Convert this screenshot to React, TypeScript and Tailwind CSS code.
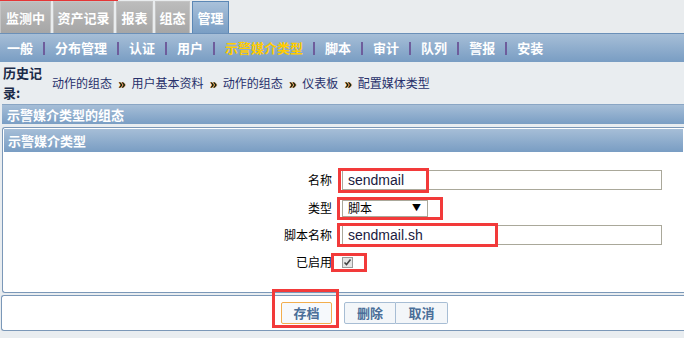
import React from "react";

const cjk = "font-['Noto_Sans_CJK_SC','Noto_Sans',sans-serif]";

function Tab({ label, w, active }: { label: string; w: string; active?: boolean }) {
  return (
    <div
      className={`${w} h-[32px] flex items-center justify-center text-[13px] font-bold text-white ${
        active
          ? "bg-gradient-to-b from-[#a9c1da] to-[#7a9ec4] border border-b-0 border-[#5b87b5]"
          : "bg-gradient-to-b from-[#bcbcbc] to-[#a6a6a6] border border-b-0 border-[#c4c4c4]"
      }`}
    >
      {label}
    </div>
  );
}

function Sep() {
  return <span className="mx-[10px] w-[2px] h-[13px] bg-[#6e5d9c]" />;
}

function Crumb() {
  return (
    <span className="mx-[6px] text-[14px] font-bold text-black [text-shadow:1px_0_#f0a020] leading-none">»</span>
  );
}

export default function App() {
  const navItems = ["一般", "分布管理", "认证", "用户", "示警媒介类型", "脚本", "审计", "队列", "警报", "安装"];
  return (
    <div className={`relative w-[684px] h-[338px] overflow-hidden bg-[#e9edf0] ${cjk}`}>
      {/* Top tabs */}
      <div className="relative h-[33px] flex items-end gap-[2px] bg-[#e9ecee]">
        <div className="absolute top-0 left-0 w-[118px] h-[1px] bg-[#e53535]" />
        <Tab label="监测中" w="w-[51px]" />
        <Tab label="资产记录" w="w-[61px]" />
        <Tab label="报表" w="w-[37px]" />
        <Tab label="组态" w="w-[35px]" />
        <Tab label="管理" w="w-[37px]" active />
      </div>
      {/* Sub nav */}
      <div className="h-[29px] border-t border-[#6b90b8] bg-gradient-to-b from-[#a6bed7] to-[#799dc3] flex items-center pl-[7px] text-[13px] font-bold text-white">
        {navItems.map((n, i) => (
          <React.Fragment key={n}>
            {i > 0 && <Sep />}
            <span className={n === "示警媒介类型" ? "text-[#ffcc00]" : ""}>{n}</span>
          </React.Fragment>
        ))}
      </div>
      {/* Breadcrumb */}
      <div className="h-[42px] flex items-center">
        <div className="w-[44px] pl-[3px] text-[13px] font-bold leading-[20px] text-[#1b2a48] break-all">
          历史记录:
        </div>
        <div className="ml-[8px] flex items-center text-[12px] text-[#27306b] pb-[1px]">
          <span>动作的组态</span>
          <Crumb />
          <span>用户基本资料</span>
          <Crumb />
          <span>动作的组态</span>
          <Crumb />
          <span>仪表板</span>
          <Crumb />
          <span>配置媒体类型</span>
        </div>
      </div>
      {/* Header 1 */}
      <div className="ml-[2px] h-[20px] border-t border-[#8aa6c4] bg-gradient-to-b from-[#a6bed7] to-[#7a9ec4] flex items-center pl-[5px] text-[13px] font-bold text-white">
        示警媒介类型的组态
      </div>
      {/* Panel 1 */}
      <div className="ml-[2px] mt-[3px] h-[166px] border border-r-0 border-[#7b98b8] rounded-l-[3px] bg-white flex flex-col">
        <div className="mx-[1px] mt-[1px] h-[23px] bg-gradient-to-b from-[#a6bed7] to-[#799dc3] flex items-center pl-[4px] text-[13px] font-bold text-white">
          示警媒介类型
        </div>
        <div className="grid grid-cols-[329px_1fr] gap-x-[10px] items-center text-[12px] text-black pt-[18px]">
          <div className="text-right">名称</div>
          <div className="h-[20px] w-[320px] border border-[#aaa89a] flex items-center pl-[5px] text-[14px] text-[#1a1a40] font-['Liberation_Sans',sans-serif]">
            sendmail
          </div>
          <div className="text-right mt-[9px]">类型</div>
          <div className="mt-[9px] h-[17px] w-[86px] border border-[#aaa89a] flex items-center justify-between pl-[5px] pr-[6px] text-[12px]">
            <span>脚本</span>
            <span className="text-[9px]">▼</span>
          </div>
          <div className="text-right mt-[8px]">脚本名称</div>
          <div className="mt-[8px] h-[20px] w-[320px] border border-[#aaa89a] flex items-center pl-[5px] text-[14px] text-[#1a1a40] font-['Liberation_Sans',sans-serif]">
            sendmail.sh
          </div>
          <div className="text-right mt-[8px]">已启用</div>
          <div className="mt-[8px] h-[17px] flex items-center">
            <div className="w-[11px] h-[11px] border border-[#9a9a9a] bg-[#e4e4e4] flex items-center justify-center">
              <svg width="9" height="9" viewBox="0 0 9 9">
                <path d="M1.5 4.5 L3.5 6.5 L7.5 1.5" stroke="#444" strokeWidth="1.6" fill="none" />
              </svg>
            </div>
          </div>
        </div>
      </div>
      {/* Panel 2 */}
      <div className="ml-[1px] mt-[2px] h-[36px] border border-r-0 border-[#7b98b8] rounded-l-[3px] bg-white flex items-center pl-[279px]">
        <button className="w-[51px] h-[22px] border border-[#f2ae4e] bg-[#f6f9fc] text-[13px] font-bold text-[#4a6e98] rounded-[2px]">
          存档
        </button>
        <div className="ml-[12px] flex">
          <button className="w-[52px] h-[22px] border border-[#a7bdd4] bg-[#f3f6f9] text-[13px] font-bold text-[#4a6e98] rounded-l-[2px]">
            删除
          </button>
          <button className="w-[52px] h-[22px] border border-l-0 border-[#a7bdd4] bg-[#f3f6f9] text-[13px] font-bold text-[#4a6e98] rounded-r-[2px]">
            取消
          </button>
        </div>
      </div>
      {/* Red highlight boxes */}
      <div className="absolute left-[338px] top-[168px] w-[91px] h-[25px] border-[3px] border-[#f23a3a]" />
      <div className="absolute left-[337px] top-[197px] w-[106px] h-[23px] border-[3px] border-[#f23a3a]" />
      <div className="absolute left-[337px] top-[223px] w-[161px] h-[24px] border-[3px] border-[#f23a3a]" />
      <div className="absolute left-[331px] top-[253px] w-[36px] h-[19px] border-[3px] border-[#f23a3a]" />
      <div className="absolute left-[272px] top-[289px] w-[67px] h-[39px] border-[3px] border-[#f23a3a]" />
    </div>
  );
}
